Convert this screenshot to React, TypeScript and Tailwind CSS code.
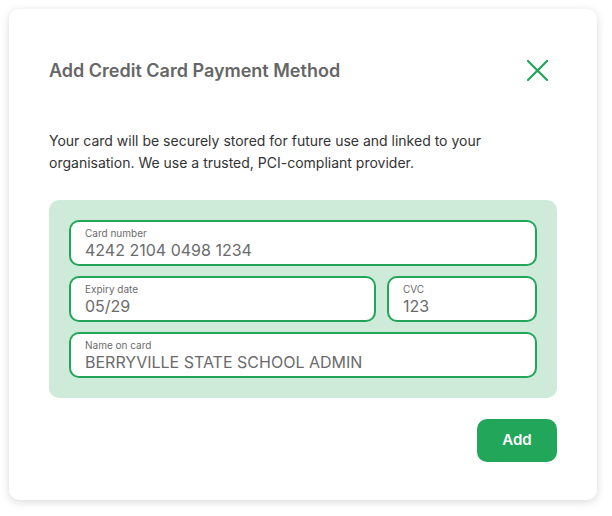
import React from 'react';

const Field = ({ label, value, className = '' }: { label: string; value: string; className?: string }) => (
  <div className={`h-[46px] rounded-[10px] border-2 border-[#22a559] bg-white px-[14px] pt-[5px] ${className}`}>
    <div className="text-[10px] leading-[13px] text-[#6b6b6b]">{label}</div>
    <div className="text-[16px] leading-[21px] text-[#6b6b6b]">{value}</div>
  </div>
);

export default function App() {
  return (
    <div className="min-h-screen bg-white pt-[9px] pl-[9px]" style={{ fontFamily: 'Inter, "Noto Sans", sans-serif' }}>
      <div className="w-[588px] h-[491px] rounded-[10px] bg-white px-[40px] pt-[41px] shadow-[0_2px_8px_rgba(0,0,0,0.15)]">
        <div className="flex h-[40px] items-center justify-between">
          <h1 className="text-[18px] font-semibold text-[#666666]">Add Credit Card Payment Method</h1>
          <button className="flex h-[40px] w-[40px] items-center justify-center text-[#22a559]">
            <svg width="21" height="21" viewBox="0 0 22 22" fill="none" stroke="currentColor" strokeWidth="2.3" strokeLinecap="round">
              <path d="M1 1 L21 21 M21 1 L1 21" />
            </svg>
          </button>
        </div>
        <p className="mt-[40px] text-[14px] leading-[22px] text-[#333333]">
          Your card will be securely stored for future use and linked to your
          <br />
          organisation. We use a trusted, PCI-compliant provider.
        </p>
        <div className="mt-[26px] flex flex-col gap-[10px] rounded-[10px] bg-[#cdebd8] p-[20px]">
          <Field label="Card number" value="4242 2104 0498 1234" />
          <div className="flex gap-[11px]">
            <Field label="Expiry date" value="05/29" className="flex-1" />
            <Field label="CVC" value="123" className="w-[150px]" />
          </div>
          <Field label="Name on card" value="BERRYVILLE STATE SCHOOL ADMIN" />
        </div>
        <div className="mt-[21px] flex justify-end">
          <button className="h-[43px] w-[80px] rounded-[10px] bg-[#22a65a] text-[15px] font-semibold text-white">Add</button>
        </div>
      </div>
    </div>
  );
}
